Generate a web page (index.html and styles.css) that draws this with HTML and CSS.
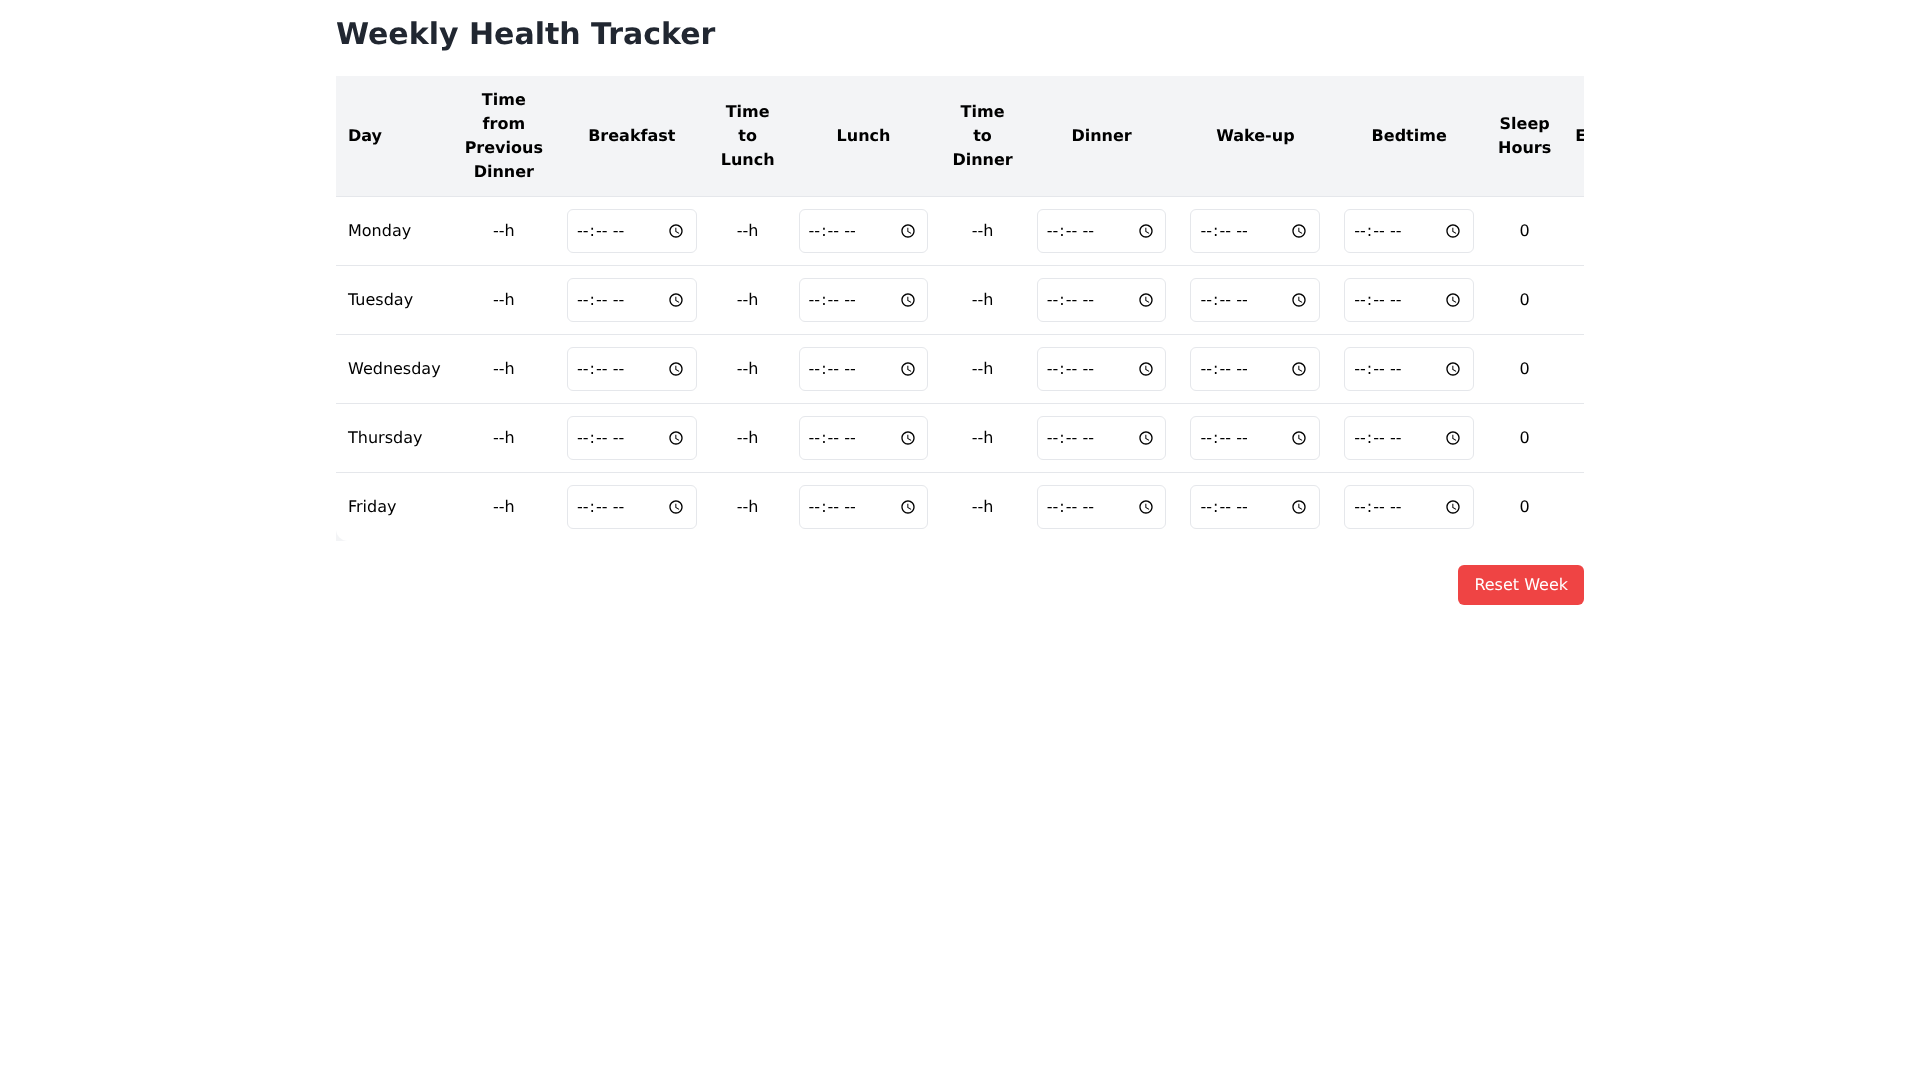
FILE: index.html
```html
<!DOCTYPE html>
<html lang="en">
<head>
<meta charset="utf-8">
<title>Weekly Health Tracker</title>
<link rel="stylesheet" href="styles.css">
</head>
<body>
<main class="page">
  <h1 class="title">Weekly Health Tracker</h1>
  <div class="table-wrap">
    <table class="tracker">
      <thead>
        <tr>
          <th class="day">Day</th><th>Time from Previous Dinner</th><th>Breakfast</th><th>Time to Lunch</th><th>Lunch</th><th>Time to Dinner</th><th>Dinner</th><th>Wake-up</th><th>Bedtime</th><th>Sleep Hours</th><th>Exercise</th>
        </tr>
      </thead>
      <tbody>
        <tr><td class="day">Monday</td><td>--h</td><td><input class="time" type="time"></td><td>--h</td><td><input class="time" type="time"></td><td>--h</td><td><input class="time" type="time"></td><td><input class="time" type="time"></td><td><input class="time" type="time"></td><td>0</td><td></td></tr>
        <tr><td class="day">Tuesday</td><td>--h</td><td><input class="time" type="time"></td><td>--h</td><td><input class="time" type="time"></td><td>--h</td><td><input class="time" type="time"></td><td><input class="time" type="time"></td><td><input class="time" type="time"></td><td>0</td><td></td></tr>
        <tr><td class="day">Wednesday</td><td>--h</td><td><input class="time" type="time"></td><td>--h</td><td><input class="time" type="time"></td><td>--h</td><td><input class="time" type="time"></td><td><input class="time" type="time"></td><td><input class="time" type="time"></td><td>0</td><td></td></tr>
        <tr><td class="day">Thursday</td><td>--h</td><td><input class="time" type="time"></td><td>--h</td><td><input class="time" type="time"></td><td>--h</td><td><input class="time" type="time"></td><td><input class="time" type="time"></td><td><input class="time" type="time"></td><td>0</td><td></td></tr>
        <tr><td class="day">Friday</td><td>--h</td><td><input class="time" type="time"></td><td>--h</td><td><input class="time" type="time"></td><td>--h</td><td><input class="time" type="time"></td><td><input class="time" type="time"></td><td><input class="time" type="time"></td><td>0</td><td></td></tr>
      </tbody>
    </table>
  </div>
  <div class="actions"><button class="reset" type="button">Reset Week</button></div>
</main>
</body>
</html>
```
FILE: styles.css
```css
* { box-sizing: border-box; }
html, body { margin: 0; padding: 0; background: #fff; }
body { font-family: "DejaVu Sans", sans-serif; font-size: 16px; line-height: 24px; color: #000; text-rendering: geometricPrecision; }
.page { width: 1280px; margin: 0 auto; padding: 16px; will-change: transform; }
.title { margin: 0 0 22px; font-size: 30px; line-height: 38px; font-weight: 700; color: #212731; }
.table-wrap { overflow-x: auto; overflow-y: hidden; scrollbar-width: none; }
.tracker { border-collapse: collapse; width: 100%; background: #f3f4f6; }
.tracker th, .tracker td { padding: 12px; text-align: center; vertical-align: middle; }
.tracker th { background: #f3f4f6; font-weight: 700; }
.tracker td { background: #fff; }
.tracker tr { border-bottom: 1px solid #e5e7eb; }
.tracker tbody tr:last-child { border-bottom: 0; }
.tracker tbody tr:last-child .day { border-bottom-left-radius: 12px; }
.tracker .day { text-align: left; }
.time { display: block; height: 44px; padding: 8px; border: 1px solid #e5e7eb; border-radius: 6px; background: #fff; color: #000; font: inherit; text-rendering: inherit; }
.actions { display: flex; justify-content: flex-end; margin-top: 24px; }
.reset { height: 40px; padding: 8px 16px; border: 0; border-radius: 6px; background: #ef4444; color: #fff; font: inherit; text-rendering: inherit; }
```
